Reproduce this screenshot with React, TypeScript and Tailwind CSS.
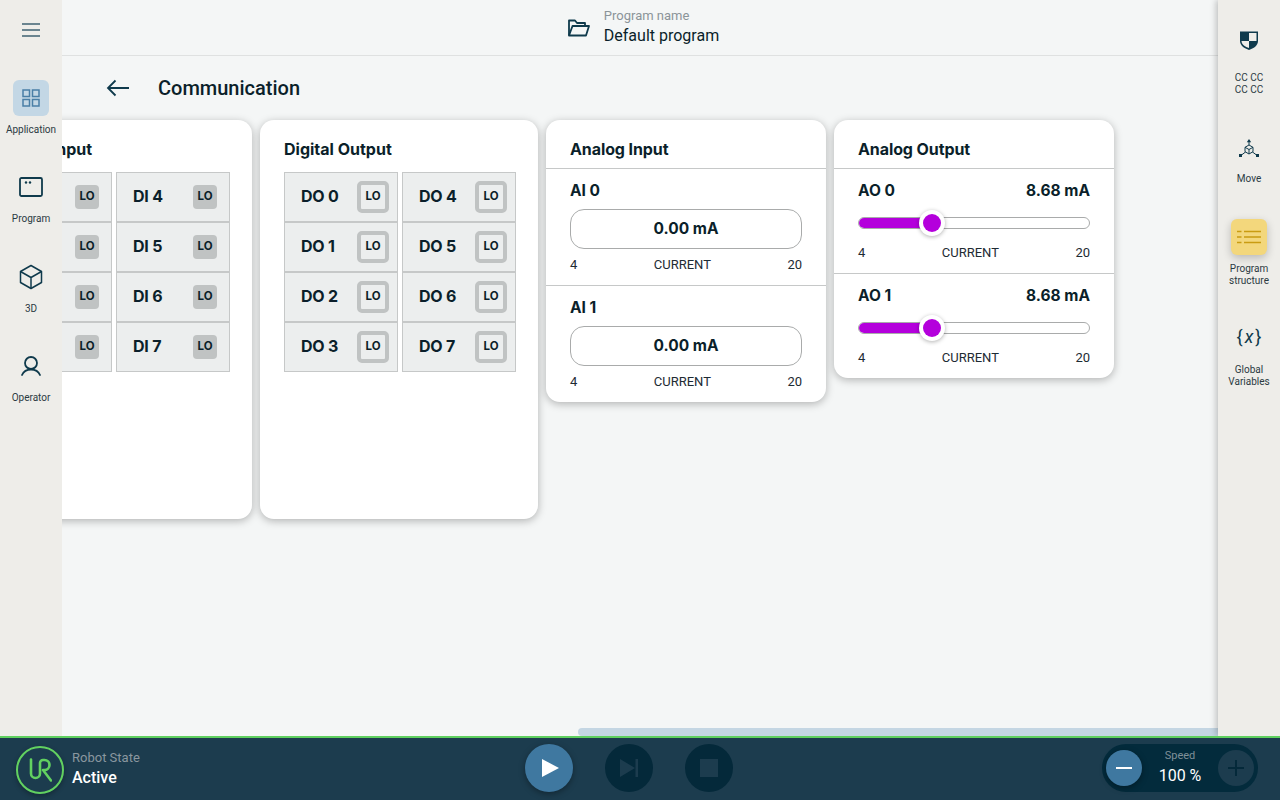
const head = "font-['Inter',sans-serif]";
const dark = "text-[#0b1f2a]";

function Label({ children }: { children: React.ReactNode }) {
  return <div className={"text-[10px] leading-[12px] text-[#2b3a42] text-center whitespace-pre-line"}>{children}</div>;
}

function Hamburger() {
  return (
    <svg width="18" height="14" viewBox="0 0 18 14" fill="none" stroke="#3f6272" strokeWidth="1.5">
      <path d="M0 1h18M0 7h18M0 13h18" />
    </svg>
  );
}

function LeftNav() {
  return (
    <aside className="w-[62px] shrink-0 bg-[#eeede9] flex flex-col items-center relative z-10">
      <div className="h-[60px] flex items-center justify-center">
        <Hamburger />
      </div>
      <div className="mt-[20px] flex flex-col items-center h-[89px]">
        <div className="w-9 h-9 rounded-[6px] bg-[#c3d7e5] flex items-center justify-center">
          <svg width="18" height="18" viewBox="0 0 18 18" fill="none" stroke="#4a7fa6" strokeWidth="1.5">
            <rect x="1" y="1" width="6.5" height="6.5" />
            <rect x="10.5" y="1" width="6.5" height="6.5" />
            <rect x="1" y="10.5" width="6.5" height="6.5" />
            <rect x="10.5" y="10.5" width="6.5" height="6.5" />
          </svg>
        </div>
        <div className="mt-[8px]"><Label>Application</Label></div>
      </div>
      <div className="flex flex-col items-center h-[90px]">
        <div className="w-9 h-9 flex items-center justify-center">
          <svg width="24" height="20" viewBox="0 0 24 20" fill="none">
            <rect x="1" y="1" width="22" height="18" rx="1.5" stroke="#0f3a4c" strokeWidth="1.8" />
            <circle cx="7" cy="5.5" r="1.2" fill="#0f3a4c" />
            <circle cx="11" cy="5.5" r="1.2" fill="#0f3a4c" />
          </svg>
        </div>
        <div className="mt-[8px]"><Label>Program</Label></div>
      </div>
      <div className="flex flex-col items-center h-[89px]">
        <div className="w-9 h-9 flex items-center justify-center">
          <svg width="24" height="26" viewBox="0 0 24 26" fill="none" stroke="#0f3a4c" strokeWidth="1.5" strokeLinejoin="round">
            <path d="M12 1.500l10.500 6v11l-10.500 6-10.500-6v-11z" />
            <path d="M1.500 7.500l10.500 6 10.500-6M12 13.500v11" />
          </svg>
        </div>
        <div className="mt-[8px]"><Label>3D</Label></div>
      </div>
      <div className="flex flex-col items-center">
        <div className="w-9 h-9 flex items-center justify-center">
          <svg width="20" height="20" viewBox="0 0 20 20" fill="none" stroke="#0f3a4c" strokeWidth="1.8" strokeLinecap="round">
            <circle cx="10" cy="7" r="6" />
            <path d="M1 19c1.500-3.500 4.500-5.500 9-5.500s7.500 2 9 5.500" />
          </svg>
        </div>
        <div className="mt-[8px]"><Label>Operator</Label></div>
      </div>
    </aside>
  );
}

function RightNav() {
  return (
    <aside className="w-[62px] shrink-0 bg-[#eeede9] flex flex-col items-center relative z-10 shadow-[-2px_0_6px_rgba(0,0,0,0.22)]">
      <div className="mt-[22px] w-9 h-9 flex items-center justify-center">
        <svg width="18" height="19" viewBox="0 0 18 19">
          <path d="M0 0.500h18v9.500c0 4.500-4.500 7.500-9 9-4.500-1.500-9-4.500-9-9z" fill="#0f3a4c" />
          <path d="M9 2h7.500v8H9zM1.500 10H9v7c-3.500-1-7.500-3.500-7.500-7z" fill="#eeede9" />
        </svg>
      </div>
      <div className="mt-[14px]"><Label>{"CC CC\nCC CC"}</Label></div>
      <div className="mt-[34px] w-9 h-9 flex items-center justify-center">
        <svg width="22" height="19" viewBox="0 0 22 19" fill="none" stroke="#0f3a4c" strokeWidth="1">
          <path d="M11 6V3M7.500 13L3.500 16M14.500 13L18.500 16" />
          <path d="M11 6l4 2.300v4.400L11 15l-4-2.300V8.300zM7 8.300l4 2.200 4-2.200M11 10.500V15" />
          <path d="M11 0l2.200 3.200H8.800z" fill="#0f3a4c" stroke="none" />
          <rect x="1" y="15" width="3" height="3" fill="#0f3a4c" stroke="none" />
          <rect x="18" y="15" width="3" height="3" fill="#0f3a4c" stroke="none" />
        </svg>
      </div>
      <div className="mt-[7px]"><Label>Move</Label></div>
      <div className="mt-[34px] w-9 h-9 rounded-[6px] bg-[#f3d77c] flex items-center justify-center shadow-[0_3px_8px_rgba(0,0,0,0.22)]">
        <svg width="24" height="14" viewBox="0 0 24 14" fill="none" stroke="#c99c12" strokeWidth="1.6">
          <path d="M0 1.500h4.500M7 1.500h17M0 7h4.500M7 7h17M0 12.500h4.500M7 12.500h17" />
        </svg>
      </div>
      <div className="mt-[8px]"><Label>{"Program\nstructure"}</Label></div>
      <div className="mt-[32px] w-9 h-9 flex items-center justify-center text-[#0f3a4c] text-[18px] leading-none font-['Roboto',sans-serif]">
        <span>{"{"}</span>
        <span className="mx-[2px] italic">x</span>
        <span>{"}"}</span>
      </div>
      <div className="mt-[9px]"><Label>{"Global\nVariables"}</Label></div>
    </aside>
  );
}

function Cell({ label, output }: { label: string; output?: boolean }) {
  return (
    <div className="h-[50px] bg-[#eceeee] border border-[#c6c8c8] flex items-center justify-between pl-[16px] pr-[8px]">
      <span className={`${head} ${dark} text-[16px] font-bold tracking-[-0.2px] -mt-[2px]`}>{label}</span>
      {output ? (
        <div className="w-8 h-8 rounded-[5px] border-[4px] border-[#c0c3c3] flex items-center justify-center">
          <span className={`${head} ${dark} text-[11.500px] font-bold`}>LO</span>
        </div>
      ) : (
        <div className="w-6 h-6 mr-[4px] rounded-[4px] bg-[#c0c3c3] flex items-center justify-center">
          <span className={`${head} ${dark} text-[11.500px] font-bold`}>LO</span>
        </div>
      )}
    </div>
  );
}

function DigitalCard({ title, prefix, output }: { title: string; prefix: string; output?: boolean }) {
  const column = (start: number) => (
    <div className="flex flex-col w-[114px]">
      {[0, 1, 2, 3].map((i) => (
        <Cell key={i} label={`${prefix} ${start + i}`} output={output} />
      ))}
    </div>
  );
  return (
    <section className="w-[278px] h-[399px] shrink-0 bg-white rounded-[14px] shadow-[0_2px_8px_rgba(0,0,0,0.28)] pl-[24px]">
      <h2 className={`${head} ${dark} text-[16px] font-bold h-[52px] pt-[18px] leading-[22px]`}>{title}</h2>
      <div className="flex gap-1">
        {column(0)}
        {column(4)}
      </div>
    </section>
  );
}

function Scale() {
  return (
    <div className="flex justify-between text-[13px] leading-[14px] text-[#1d2b33]">
      <span>4</span>
      <span>CURRENT</span>
      <span>20</span>
    </div>
  );
}

function AnalogInput({ name, last }: { name: string; last?: boolean }) {
  return (
    <div className={`px-[24px] ${last ? "h-[116px]" : "h-[117px] border-b border-[#c6c8c8]"} pt-[12px]`}>
      <div className={`${head} ${dark} text-[15.500px] font-bold leading-[20px]`}>{name}</div>
      <div className={`mt-[8px] h-10 rounded-[14px] border border-[#a9abab] flex items-center justify-center ${head} ${dark} text-[15.500px] font-bold`}>
        0.00 mA
      </div>
      <div className="mt-[9px]"><Scale /></div>
    </div>
  );
}

function AnalogOutput({ name, last }: { name: string; last?: boolean }) {
  return (
    <div className={`px-[24px] ${last ? "h-[104px]" : "h-[105px] border-b border-[#c6c8c8]"} pt-[12px]`}>
      <div className={`flex justify-between ${head} ${dark} text-[15.500px] font-bold leading-[20px]`}>
        <span>{name}</span>
        <span>8.68 mA</span>
      </div>
      <div className="relative mt-[16px] h-[12px] rounded-full border border-[#a9abab] bg-white">
        <div className="h-[10px] w-[74px] rounded-l-full bg-[#b400dc]" />
        <div className="absolute left-[60px] top-[-8px] w-[26px] h-[26px] rounded-full bg-white shadow-[0_1px_4px_rgba(0,0,0,0.3)] flex items-center justify-center">
          <div className="w-[18px] h-[18px] rounded-full bg-[#b400dc]" />
        </div>
      </div>
      <div className="mt-[17px]"><Scale /></div>
    </div>
  );
}

function Content() {
  return (
    <main className="flex-1 min-w-0 flex flex-col bg-[#f4f6f6] overflow-hidden">
      <header className="h-[56px] shrink-0 border-b border-[#dfe1e1] flex items-center justify-center pl-[5px]">
        <svg width="22" height="18" viewBox="0 0 22 18" fill="none" stroke="#0f3a4c" strokeWidth="1.8" strokeLinejoin="round" className="mr-[14px] ml-[2px]">
          <path d="M1 16.500V1.500h6l2 2.500h8v3" />
          <path d="M1 16.500l3.500-9.500h16.500l-3 9.500z" />
        </svg>
        <div>
          <div className="text-[13px] leading-[14px] text-[#8b9499]">Program name</div>
          <div className={`text-[16px] leading-[20px] mt-[3px] ${dark}`}>Default program</div>
        </div>
      </header>
      <div className="h-[64px] shrink-0 flex items-center pl-[44px]">
        <svg width="23" height="18" viewBox="0 0 23 18" fill="none" stroke="#0f3a4c" strokeWidth="1.8">
          <path d="M23 9H2M9.500 1.500L2 9l7.500 7.500" />
        </svg>
        <h1 className={`ml-[29px] text-[20px] font-medium leading-none ${dark} font-['Roboto',sans-serif]`}>Communication</h1>
      </div>
      <div className="flex-1 flex items-start gap-2 ml-[-88px]">
        <DigitalCard title="Digital Input" prefix="DI" />
        <DigitalCard title="Digital Output" prefix="DO" output />
        <section className="w-[280px] shrink-0 bg-white rounded-[14px] shadow-[0_2px_8px_rgba(0,0,0,0.28)]">
          <h2 className={`${head} ${dark} text-[16px] font-bold h-[49px] pt-[18px] px-[24px] leading-[22px] tracking-[-0.1px] border-b border-[#c6c8c8]`}>Analog Input</h2>
          <AnalogInput name="AI 0" />
          <AnalogInput name="AI 1" last />
        </section>
        <section className="w-[280px] shrink-0 bg-white rounded-[14px] shadow-[0_2px_8px_rgba(0,0,0,0.28)]">
          <h2 className={`${head} ${dark} text-[16px] font-bold h-[49px] pt-[18px] px-[24px] leading-[22px] tracking-[-0.1px] border-b border-[#c6c8c8]`}>Analog Output</h2>
          <AnalogOutput name="AO 0" />
          <AnalogOutput name="AO 1" last />
        </section>
      </div>
      <div className="h-2 shrink-0 flex justify-end">
        <div className="w-[640px] h-2 bg-[#c4d6e3] rounded-l-full" />
      </div>
    </main>
  );
}

function Footer() {
  return (
    <footer className="h-[64px] shrink-0 bg-[#1c3c4e] border-t-2 border-[#5fd05f] pb-[2px] flex items-center relative z-20">
      <div className="w-[48px] h-[48px] ml-[16px] mt-[4px] rounded-full border-2 border-[#62d160] flex items-center justify-center shadow-[0_2px_5px_rgba(0,0,0,0.3)]">
        <svg width="24" height="24" viewBox="0 0 24 24" fill="none" stroke="#62d160" strokeWidth="2.600" strokeLinecap="round" strokeLinejoin="round">
          <path d="M3 1.500v14a4.500 4.500 0 0 0 9 0V5a3 3 0 0 1 3-3h1.500a5 5 0 0 1 0 10H15l8 10.500" />
        </svg>
      </div>
      <div className="ml-2 w-[453px] mt-[2px]">
        <div className="text-[13px] leading-[14px] text-[#8a979f]">Robot State</div>
        <div className="text-[16px] leading-[20px] mt-[3px] font-medium text-white">Active</div>
      </div>
      <button className="w-12 h-12 rounded-full bg-[#3f78a0] flex items-center justify-center shadow-[0_2px_6px_rgba(0,0,0,0.35)]">
        <svg width="17" height="18" viewBox="0 0 17 18" className="ml-[3px]"><path d="M0 0l17 9-17 9z" fill="#fff" /></svg>
      </button>
      <button className="ml-8 w-12 h-12 rounded-full bg-[#04293a] flex items-center justify-center">
        <svg width="18" height="18" viewBox="0 0 18 18" fill="#1c3c4e"><path d="M0 0l15 9-15 9z" /><rect x="15.500" y="0" width="2.500" height="18" /></svg>
      </button>
      <button className="ml-8 w-12 h-12 rounded-full bg-[#04293a] flex items-center justify-center">
        <div className="w-[18px] h-[18px] bg-[#1c3c4e]" />
      </button>
      <div className="ml-[369px] w-[156px] h-12 rounded-full bg-[#032b3c] flex items-center justify-between px-1">
        <button className="w-9 h-9 rounded-full bg-[#3f78a0] flex items-center justify-center shadow-[0_2px_6px_rgba(0,0,0,0.35)]">
          <div className="w-4 h-[2px] bg-white" />
        </button>
        <div className="text-center">
          <div className="text-[11px] leading-[12px] text-[#7f8f98] -mt-[1px]">Speed</div>
          <div className="text-[16px] leading-[20px] mt-[4px] text-white">100 %</div>
        </div>
        <button className="w-9 h-9 rounded-full bg-[#1c3c4e] flex items-center justify-center">
          <svg width="16" height="16" viewBox="0 0 16 16" stroke="#04293a" strokeWidth="2"><path d="M8 0v16M0 8h16" /></svg>
        </button>
      </div>
    </footer>
  );
}

export default function App() {
  return (
    <div className="w-[1280px] h-[800px] flex flex-col overflow-hidden font-['Roboto',sans-serif]">
      <div className="flex-1 min-h-0 flex">
        <LeftNav />
        <Content />
        <RightNav />
      </div>
      <Footer />
    </div>
  );
}
